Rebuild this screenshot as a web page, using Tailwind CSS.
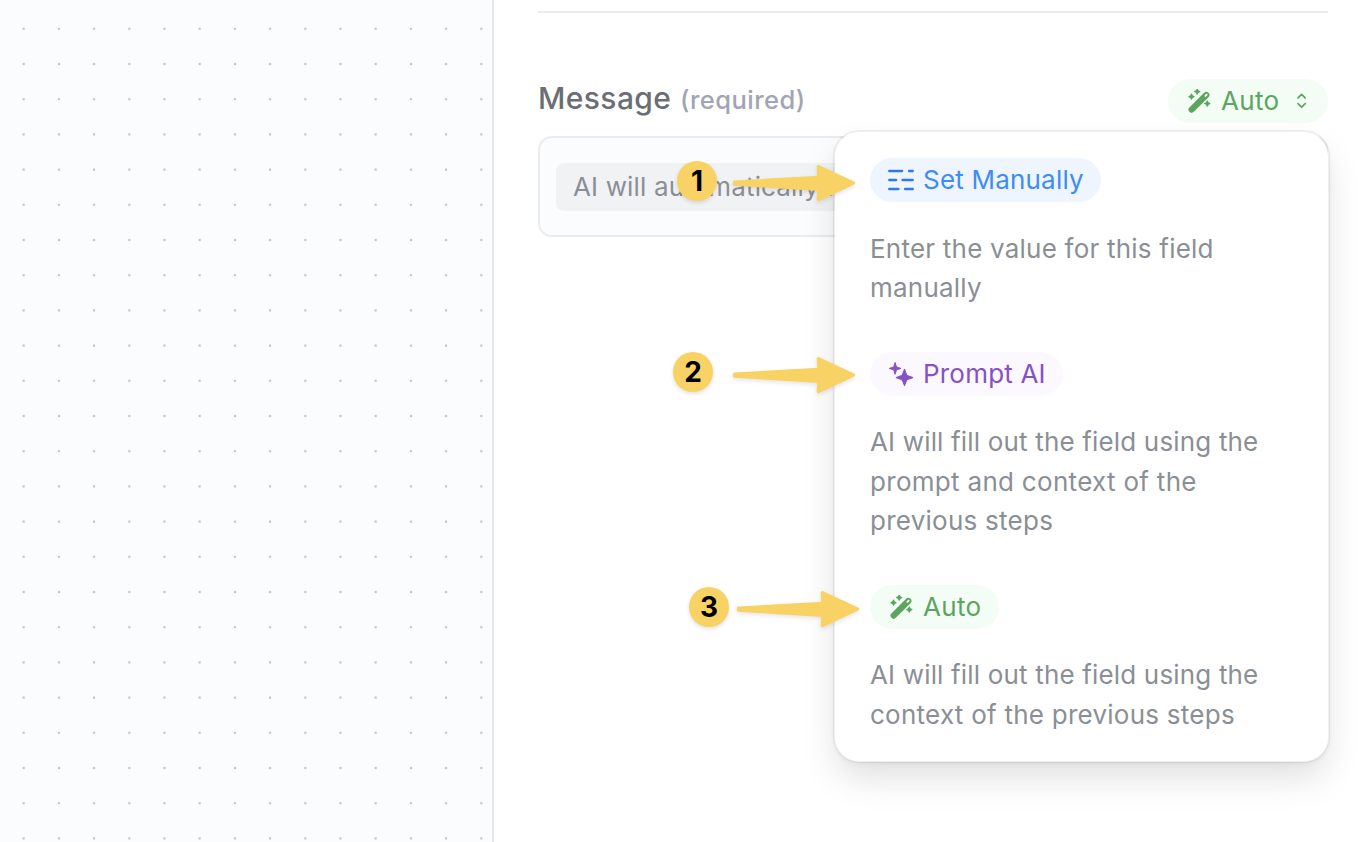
<!DOCTYPE html>
<html lang="en">
<head>
<meta charset="utf-8">
<title>Message field</title>
<script src="https://cdn.jsdelivr.net/npm/@tailwindcss/browser@4"></script>
</head>
<body class="bg-white font-['Inter',sans-serif] text-[#8a8f96] overflow-hidden">
<svg class="hidden">
  <symbol id="wand" viewBox="0 0 24 24">
    <path d="M3.6 20.6 18.3 6" stroke="currentColor" stroke-width="6.2" stroke-linecap="round" fill="none"/>
    <path d="M17.4 6.9 18.7 5.6" stroke="#f3fdf6" stroke-width="1.9" stroke-linecap="round"/>
    <path d="M9.2 0l.9 1.7 1.7.9-1.7.9-.9 1.7-.9-1.7-1.7-.9 1.7-.9zM3.5 5.1l.9 1.7 1.7.9-1.7.9-.9 1.7-.9-1.7-1.7-.9 1.7-.9zM19.3 12l.9 1.7 1.7.9-1.7.9-.9 1.7-.9-1.7-1.7-.9 1.7-.9z" fill="currentColor" stroke="currentColor" stroke-width="1.1" stroke-linejoin="round"/>
  </symbol>
  <symbol id="arrow" viewBox="0 0 126 42">
    <path d="M2.5 20.2 87 15.5 86.4 4.7 121.5 21 86.4 37.5 87 27.4 2.5 22Z" fill="#f8d264" stroke="#f8d264" stroke-width="3.4" stroke-linejoin="round"/>
  </symbol>
</svg>
<div class="relative flex w-[1358px] h-[842px]">
  <aside class="w-[494px] h-full shrink-0 bg-[#fbfcfe] border-r-2 border-[#e5e7ea]">
    <svg class="w-full h-full">
      <defs><pattern id="dots" x="6.1" y="11.2" width="35.2" height="35.2" patternUnits="userSpaceOnUse"><circle cx="17.6" cy="17.6" r="1.2" fill="#c0c2c5"/></pattern></defs>
      <rect width="100%" height="100%" fill="url(#dots)"/>
    </svg>
  </aside>
  <main class="flex-1 pl-11 pr-[30px] pt-[11px]">
    <div class="h-0.5 bg-[#ebecee]"></div>
    <div class="mt-[66px] h-11 flex items-center justify-between">
      <label class="flex items-baseline whitespace-nowrap -mt-1"><span class="text-[30px] leading-10 font-medium text-[#6a6e75] w-[142px] tracking-[0.4px]">Message</span><span class="text-[25.5px] font-medium text-[#9fa5b4] tracking-[0.45px]">(required)</span></label>
      <button class="h-11 w-40 rounded-full bg-[#f3fdf6] text-[#5ca55e] flex items-center pl-5 text-[26px] tracking-[0.3px]">
        <svg class="w-6 h-6 mr-[9px]"><use href="#wand"/></svg><span class="w-[75px] text-left -mt-0.5">Auto</span>
        <svg class="w-3 h-4" viewBox="0 0 12 16" fill="none" stroke="currentColor" stroke-width="1.7" stroke-linecap="round" stroke-linejoin="round"><path d="M2 4.8 5.6 1.3 9.2 4.8M2 10.7l3.6 3.5 3.6-3.5"/></svg>
      </button>
    </div>
    <div class="mt-[13px] h-[101px] rounded-[14px] border-2 border-[#eaebed] bg-[#fbfcfe] pl-4 pr-4 pt-[25px]">
      <div class="h-12 rounded-lg bg-[#f1f2f4] pl-[17px] text-[26px] leading-12 tracking-[0.15px] whitespace-nowrap">AI will automatically fill</div>
    </div>
  </main>
  <section class="absolute left-[833px] top-[130px] w-[497px] h-[633px] rounded-[26px] bg-white bg-clip-padding border-2 border-black/6 shadow-[0_18px_36px_-4px_rgba(0,0,0,0.13),0_2px_4px_rgba(0,0,0,0.03)] pl-[35px] pt-[26px] text-[26px] leading-[39.5px] tracking-[0.25px] whitespace-nowrap">
    <div class="h-11 w-[231px] rounded-full bg-[#eef5fe] text-[#3f8cf5] flex items-center pl-[18px] tracking-[0.2px]">
      <svg class="w-[26px] h-6 mr-[9px]" viewBox="0 0 26 24" stroke="#2f78ee" stroke-width="2.3" stroke-linecap="round"><path d="M1.2 3h13M21 3h3.8M1.2 12h7M14.5 12h10.3M1.2 21h9.3M17 21h7.8"/></svg>Set Manually
    </div>
    <p class="mt-[27px] leading-[39px] tracking-[0.22px]">Enter the value for this field<br>manually</p>
    <div class="mt-[45px] h-11 w-[193px] rounded-full bg-[#fbf9ff] text-[#8651c4] flex items-center pl-[18px] tracking-[0.2px]">
      <svg class="w-[26px] h-6 mr-[9px]" viewBox="0 0 26 24" fill="currentColor" stroke="currentColor" stroke-width="1" stroke-linejoin="round"><path d="M7.1.5 8.5 5l4.5 1.4-4.5 1.4-1.4 4.5-1.4-4.5L1.2 6.4 5.7 5zM16.5 7l2.3 6.3 6.3 2.3-6.3 2.3-2.3 5.9-2.3-5.9-6.3-2.3 6.3-2.3z"/></svg>Prompt AI
    </div>
    <p class="mt-[26px]"><span class="tracking-[0.17px]">AI will fill out the field using the</span><br><span class="tracking-[0.3px]">prompt and context of the</span><br>previous steps</p>
    <div class="mt-[44.5px] h-11 w-[129px] rounded-full bg-[#f3fdf6] text-[#5ca55e] flex items-center pl-5 tracking-[0.3px]">
      <svg class="w-6 h-6 mr-[9px]"><use href="#wand"/></svg>Auto
    </div>
    <p class="mt-[26px]"><span class="tracking-[0.17px]">AI will fill out the field using the</span><br>context of the previous steps</p>
  </section>
  <svg class="absolute left-[732px] top-[162px] w-[126px] h-[42px] drop-shadow-[0_2px_2px_rgba(0,0,0,0.1)]"><use href="#arrow"/></svg>
  <svg class="absolute left-[732px] top-[354px] w-[126px] h-[42px] drop-shadow-[0_2px_2px_rgba(0,0,0,0.1)]"><use href="#arrow"/></svg>
  <svg class="absolute left-[736px] top-[588px] w-[126px] h-[42px] drop-shadow-[0_2px_2px_rgba(0,0,0,0.1)]"><use href="#arrow"/></svg>
  <span class="absolute left-[677px] top-[161px] size-10 rounded-full bg-[#f8d264] text-black font-bold text-[28px] leading-10 text-center shadow-[0_2px_4px_rgba(0,0,0,0.12)]">1</span>
  <span class="absolute left-[673px] top-[352px] size-10 rounded-full bg-[#f8d264] text-black font-bold text-[28px] leading-10 text-center shadow-[0_2px_4px_rgba(0,0,0,0.12)]">2</span>
  <span class="absolute left-[689px] top-[587px] size-10 rounded-full bg-[#f8d264] text-black font-bold text-[28px] leading-10 text-center shadow-[0_2px_4px_rgba(0,0,0,0.12)]">3</span>
</div>
</body>
</html>
